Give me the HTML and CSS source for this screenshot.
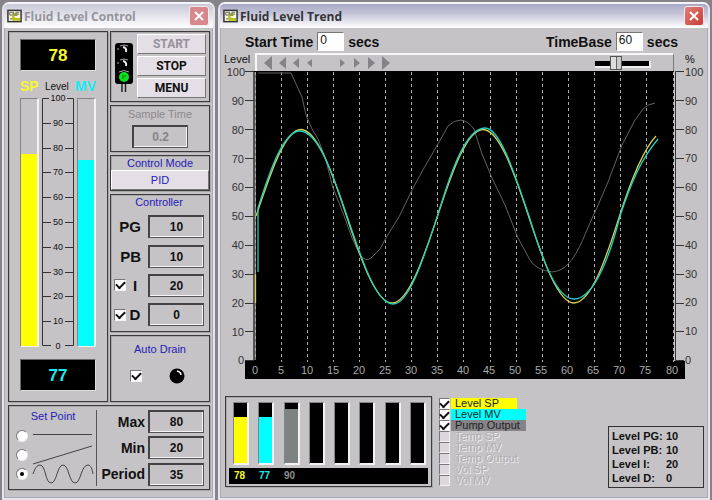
FILE: index.html
```html
<!DOCTYPE html>
<html lang="en">
<head>
<meta charset="utf-8">
<title>Fluid Level Control</title>
<link rel="stylesheet" href="styles.css">
</head>
<body>
<main class="desktop">
  <section class="window inactive">
    <header class="titlebar">
      <svg class="app-icon" viewBox="0 0 16 14" aria-hidden="true"><rect x="1" y="1" width="14" height="12" fill="#fffbe8" stroke="#333" stroke-width="1.6"/><path d="M3 3h4v3H3zM9 3h4M9 5h4M3 10h3" fill="none" stroke="#555"/><path d="M5 8l2-2 2 3h5v3H6z" fill="#b4c41c"/><path d="M5 4h6v3H8z" fill="#8a9830"/></svg>
      <h1>Fluid Level Control</h1>
      <button class="close" aria-label="Close"><svg viewBox="0 0 18 18"><path d="M5 5l8 8M13 5l-8 8"/></svg></button>
    </header>
    <div class="control-client">
      <div class="upper">
        <section class="group gauges">
          <output class="display sp">78</output>
          <div class="gauge-names"><span class="sp">SP</span><small>Level</small><span class="mv">MV</span></div>
          <div class="gauge-bars">
            <div class="track"><div class="fill-sp" style="height:77.5%"></div></div>
            <svg class="scale" viewBox="0 0 34 256" role="img" aria-label="Level scale">
              <path d="M8 4.500H1.500V251.500H10M26 4.500H32.500V251.500H24M1 29.500H10M1 54.500H10M1 78.500H10M1 103.500H10M1 128.500H10M1 153.500H10M1 178.500H10M1 202.500H10M1 227.500H10M24 29.500H33M24 54.500H33M24 78.500H33M24 103.500H33M24 128.500H33M24 153.500H33M24 178.500H33M24 202.500H33M24 227.500H33"/>
              <g><text x="17" y="7">100</text><text x="17" y="32">90</text><text x="17" y="57">80</text><text x="17" y="81">70</text><text x="17" y="106">60</text><text x="17" y="131">50</text><text x="17" y="156">40</text><text x="17" y="181">30</text><text x="17" y="205">20</text><text x="17" y="230">10</text><text x="17" y="255">0</text></g>
            </svg>
            <div class="track"><div class="fill-mv" style="height:75%"></div></div>
          </div>
          <output class="display mv">77</output>
        </section>
        <div class="side">
          <section class="group run">
            <svg class="lights" viewBox="0 0 18 52" role="img" aria-label="Green light"><rect x="0" y="1" width="18" height="41" rx="3" fill="#000"/><path d="M7 42v8M10.500 42v8" stroke="#222" stroke-width="1.500"/><path d="M5 4q4-2 8 0M3 6v2M5 18q4-2 8 0M3 20v2M4 30q5-3 10 0" fill="none" stroke="#aaa"/><path d="M8 5q4 1 3 5M8 19q4 1 3 5" fill="none" stroke="#eee" stroke-width="2"/><circle cx="9" cy="35" r="5" fill="#0ce020"/><path d="M7 34h4M7 36h2" stroke="#087810"/></svg>
            <div class="buttons"><button disabled>START</button><button>STOP</button><button>MENU</button></div>
          </section>
          <section class="group sample">
            <label for="sample">Sample Time</label>
            <input class="field" id="sample" value="0.2" disabled>
          </section>
          <section class="group mode">
            <h2>Control Mode</h2>
            <button>PID</button>
          </section>
          <section class="group controller">
            <h2>Controller</h2>
            <div class="row"><label for="pg">PG</label><input class="field" id="pg" value="10"></div>
            <div class="row"><label for="pb">PB</label><input class="field" id="pb" value="10"></div>
            <div class="row"><input type="checkbox" class="check" checked aria-label="Enable I"><label for="ki">I</label><input class="field" id="ki" value="20"></div>
            <div class="row"><input type="checkbox" class="check" checked aria-label="Enable D"><label for="kd">D</label><input class="field" id="kd" value="0"></div>
          </section>
          <section class="group drain">
            <h2>Auto Drain</h2>
            <div class="drain-row">
              <input type="checkbox" class="check" checked aria-label="Auto Drain">
              <svg class="lamp" viewBox="0 0 16 16" aria-hidden="true"><circle cx="8" cy="8" r="7.500"/><path d="M8 3q4 1 4 4" fill="none" stroke="#fff" stroke-width="1.500"/></svg>
            </div>
          </section>
        </div>
      </div>
      <section class="group setpoint">
        <div class="shapes">
          <h2>Set Point</h2>
          <label><input type="radio" name="shape" aria-label="Constant"><svg viewBox="0 0 62 20"><path d="M1 8.500H60"/></svg></label>
          <label><input type="radio" name="shape" aria-label="Ramp"><svg viewBox="0 0 62 20"><path d="M1 19L60 1"/></svg></label>
          <label><input type="radio" name="shape" aria-label="Sine" checked><svg viewBox="0 0 62 20"><path d="M1 10C3 4 5 1 8 1C14 1 13 19 19 19C25 19 25 1 31 1C37 1 37 19 43 19C49 19 49 1 56 1C59 1 60 5 61 10"/></svg></label>
        </div>
        <div class="limits">
          <label for="max">Max</label><input class="field" id="max" value="80">
          <label for="min">Min</label><input class="field" id="min" value="20">
          <label for="period">Period</label><input class="field" id="period" value="35">
        </div>
      </section>
    </div>
  </section>

  <section class="window">
    <header class="titlebar">
      <svg class="app-icon" viewBox="0 0 16 14" aria-hidden="true"><rect x="1" y="1" width="14" height="12" fill="#fffbe8" stroke="#333" stroke-width="1.6"/><path d="M3 3h4v3H3zM9 3h4M9 5h4M3 10h3" fill="none" stroke="#555"/><path d="M5 8l2-2 2 3h5v3H6z" fill="#b4c41c"/><path d="M5 4h6v3H8z" fill="#8a9830"/></svg>
      <h1>Fluid Level Trend</h1>
      <button class="close" aria-label="Close"><svg viewBox="0 0 18 18"><path d="M5 5l8 8M13 5l-8 8"/></svg></button>
    </header>
    <div class="trend-client">
      <div class="times">
        <div><label for="start">Start Time</label><input id="start" value="0"><span>secs</span></div>
        <div><label for="base">TimeBase</label><input id="base" value="60"><span>secs</span></div>
      </div>
      <div class="scrollrow">
        <span class="axis-name">Level</span>
        <div class="toolbar">
          <div class="arrows">
            <button aria-label="Back to start"><svg viewBox="0 0 14 14"><path d="M11 0V14L3 7z"/></svg></button>
            <button aria-label="Back a page"><svg viewBox="0 0 14 14"><path d="M11 1V13L4 7z"/></svg></button>
            <button aria-label="Back"><svg viewBox="0 0 14 14"><path d="M10 2V12L4 7z"/></svg></button>
            <button aria-label="Step back"><svg viewBox="0 0 14 14"><path d="M9 3V11L4 7z"/></svg></button>
          </div>
          <div class="arrows">
            <button aria-label="Step forward"><svg viewBox="0 0 14 14"><path d="M5 3V11L10 7z"/></svg></button>
            <button aria-label="Forward"><svg viewBox="0 0 14 14"><path d="M5 2V12L11 7z"/></svg></button>
            <button aria-label="Forward a page"><svg viewBox="0 0 14 14"><path d="M5 1V13L12 7z"/></svg></button>
            <button aria-label="Forward to end"><svg viewBox="0 0 14 14"><path d="M5 0V14L13 7z"/></svg></button>
          </div>
          <input type="range" min="0" max="100" value="36" aria-label="Time base">
        </div>
        <span class="axis-name percent">%</span>
      </div>
      <svg class="chart" viewBox="222 66 484 314" role="img" aria-label="Level trend">
        <path d="M253 71H674V361H685V379H245V361H253z" fill="#000"/>
        <path d="M254.500 72V360" stroke="#777" stroke-width="3"/>
        <path class="grid" d="M255.500 72V360M281.500 72V362M307.500 72V362M333.500 72V362M359.500 72V362M385.500 72V362M411.500 72V362M437.500 72V362M463.500 72V362M490.500 72V362M516.500 72V362M542.500 72V362M568.500 72V362M594.500 72V362M620.500 72V362M646.500 72V362M673.500 72V362"/>
        <path class="ticks" d="M245 71.500H254M245 100.500H254M245 129.500H254M245 158.500H254M245 187.500H254M245 216.500H254M245 245.500H254M245 274.500H254M245 303.500H254M245 331.500H254M245 360.500H254V71.500M684 71.500H675.500V360.500H684M675 100.500H684M675 129.500H684M675 158.500H684M675 187.500H684M675 216.500H684M675 245.500H684M675 274.500H684M675 303.500H684M675 331.500H684"/>
        <g class="left"><text x="245" y="76">100</text><text x="244" y="105">90</text><text x="244" y="134">80</text><text x="244" y="163">70</text><text x="244" y="191">60</text><text x="244" y="220">50</text><text x="244" y="249">40</text><text x="244" y="278">30</text><text x="244" y="307">20</text><text x="244" y="336">10</text><text x="244" y="364">0</text></g>
        <g class="right"><text x="685" y="76">100</text><text x="685" y="105">90</text><text x="685" y="134">80</text><text x="685" y="162">70</text><text x="685" y="191">60</text><text x="685" y="220">50</text><text x="685" y="249">40</text><text x="685" y="278">30</text><text x="685" y="306">20</text><text x="685" y="335">10</text><text x="685" y="364">0</text></g>
        <g class="bottom"><text x="255" y="374">0</text><text x="281" y="374">5</text><text x="307" y="374">10</text><text x="333" y="374">15</text><text x="359" y="374">20</text><text x="385" y="374">25</text><text x="411" y="374">30</text><text x="437" y="374">35</text><text x="463" y="374">40</text><text x="489" y="374">45</text><text x="515" y="374">50</text><text x="541" y="374">55</text><text x="567" y="374">60</text><text x="593" y="374">65</text><text x="619" y="374">70</text><text x="645" y="374">75</text><text x="672" y="374">80</text></g>
        <path class="line pump" d="M258 73H291L302 97L306 115L312 129L318 139L325 157L333 188L343 213L352 238L360 255Q366 262 371 258L380 249L386 238L400 215L412 190L424 168L438 144L448 126Q454 120 461 120Q468 121 474 129L482 154L492 178L505 205L518 238L530 260Q536 270 552 272Q562 271 568 264C580 252 585 232 596 210L608 182L622 145L635 120L643 109Q648 104 655 103"/>
        <path class="line level-sp" d="M255.500 303V274M256 216C271 172 285 129.500 301 129.500C317 129.500 332 172 346.500 216C361 260 376 303 392 303C408 303 423 260 437.500 216C452 172 467 129.500 483 129.500C499 129.500 514 172 528.500 216C543 260 558 303 574 303C592 303 608 252 619.500 216C631 180 643 150 656 136"/>
        <path class="line level-mv" d="M258 272V208C271 167 284 131 300 131C318 131 333 174 347 216C362 260 376 304 393 304C409 304 423 260 437.500 216C451 171 466 128 485 128C500 128 514 172 529 216C543 262 557 299 574 299C595 299 611 252 620 216C632 180 642 158 658 139"/>
      </svg>
      <div class="lower">
        <section class="group meters">
          <div class="meter-bars">
            <div><i class="fill-sp" style="height:77%"></i></div><div><i class="fill-mv" style="height:76%"></i></div><div><i class="fill-out" style="height:90%"></i></div><div></div><div></div><div></div><div></div><div></div>
          </div>
          <div class="meter-values"><output class="sp">78</output><output class="mv">77</output><output class="out">90</output></div>
        </section>
        <div class="traces">
          <label class="on"><input type="checkbox" class="check" checked><span class="tag yellow">Level SP</span></label>
          <label class="on"><input type="checkbox" class="check" checked><span class="tag cyan">Level MV</span></label>
          <label class="on"><input type="checkbox" class="check" checked><span class="tag gray">Pump Output</span></label>
          <label><input type="checkbox" class="check" disabled><span>Temp SP</span></label>
          <label><input type="checkbox" class="check" disabled><span>Temp MV</span></label>
          <label><input type="checkbox" class="check" disabled><span>Temp Output</span></label>
          <label><input type="checkbox" class="check" disabled><span>Vol SP</span></label>
          <label><input type="checkbox" class="check" disabled><span>Vol MV</span></label>
        </div>
        <table class="summary">
          <tr><th scope="row">Level PG:</th><td>10</td></tr>
          <tr><th scope="row">Level PB:</th><td>10</td></tr>
          <tr><th scope="row">Level I:</th><td>20</td></tr>
          <tr><th scope="row">Level D:</th><td>0</td></tr>
        </table>
      </div>
    </div>
  </section>
</main>
</body>
</html>
```
FILE: styles.css
```css
* { box-sizing: border-box; }
body { margin: 0; background: #868488; font: 11px "Liberation Sans", Arial, sans-serif; color: #111; }
h1, h2 { margin: 0; }
button, input { font: inherit; color: inherit; margin: 0; padding: 0; border-radius: 0; }
.desktop { display: grid; grid-template-columns: 213fr 492fr; gap: 3px; padding: 2px 2px 3px; }

/* Window frame */
.window { display: flex; flex-direction: column; background: #c6c3c6; border: 2px solid #e6e5ee; border-top-color: #f4f4fa; border-radius: 7px 7px 0 0; box-shadow: inset 0 0 0 1px #aaa8ba; overflow: hidden; }
.titlebar { display: flex; align-items: center; height: 24px; padding: 0 4px 0 3px; background: linear-gradient(#a9a9c6, #c4c4d8 40%, #fff); }
.inactive .titlebar { background: linear-gradient(#c9c9d8, #dedee8 40%, #fff); }
.titlebar h1 { flex: 1; margin-left: 2px; font: bold 12px "Open Sans", "Noto Sans", sans-serif; color: #333338; }
.inactive h1 { color: #96949c; }
.app-icon { width: 15px; height: 14px; }
.close { width: 20px; height: 20px; border: 1px solid #f2eaea; border-radius: 3px; background: linear-gradient(135deg, #e08078, #c83c38); }
.inactive .close { background: #d8888c; }
.close svg { display: block; width: 18px; height: 18px; stroke: #fff; stroke-width: 2; }

.group { border: 1px solid #3c3a3c; box-shadow: inset 1px 1px 0 #aaa7aa, 1px 1px 0 #aaa7aa; }
.group h2 { font-size: 11px; font-weight: normal; line-height: 13px; text-align: center; color: #2420b8; }
.sp { color: #f8f828; }
.mv { color: #18ecf4; }
.out { color: #889090; }
.fill-sp { background: #ff0; }
.fill-mv { background: #0ff; }
.fill-out { background: #7b8480; }

/* Control window */
.control-client { display: flex; flex-direction: column; gap: 3px; padding: 3px 3px 8px 4px; }
.upper { display: grid; grid-template-columns: minmax(0, 1fr) minmax(0, 1fr); gap: 2px; }
.gauges { display: flex; flex-direction: column; padding: 7px 11px 10px; }
.display { display: block; height: 32px; line-height: 31px; text-align: center; background: #000; border: 1px solid #6a686a; border-right-color: #ddd; border-bottom-color: #ddd; font-weight: bold; font-size: 17px; }
.gauge-names { display: flex; justify-content: space-between; align-items: center; margin-top: 7px; height: 16px; font-weight: bold; font-size: 14px; }
.gauge-names small { font-size: 10px; font-weight: normal; color: #111; }
.gauge-bars { display: flex; justify-content: space-between; align-items: center; margin-bottom: 9px; }
.track { display: flex; align-items: flex-end; width: 19px; height: 249px; border: 1px solid #858385; border-width: 1px 2px 1px 1px; border-right-color: #f4f2f4; border-bottom-color: #f4f2f4; }
.track div { width: 100%; }
.scale { width: 34px; height: 256px; }
.scale path { fill: none; stroke: #333; }
.scale text { font-size: 9px; text-anchor: middle; fill: #111; }
.side { display: flex; flex-direction: column; gap: 3px; }
.run { display: flex; gap: 4px; height: 71px; padding: 2px 3px 2px 4px; }
.lights { width: 18px; height: 52px; margin-top: 8px; }
.buttons { flex: 1; display: flex; flex-direction: column; gap: 2px; }
.buttons button, .mode button { border: 1px solid #fff; border-right-color: #777; border-bottom-color: #777; background: #e4dfe6; }
.buttons button { height: 20px; font: bold 12px Roboto, sans-serif; }
.buttons button:disabled { color: #96929a; }
.sample { height: 47px; text-align: center; color: #8b898b; padding-top: 2px; }
.sample label { display: block; line-height: 13px; }
.field { flex: none; width: 56px; height: 23px; border: 2px solid #444244; border-right: 1px solid #555; border-bottom: 1px solid #555; background: #c6c3c6; box-shadow: inset -1px -1px 0 #f6f4f6; text-align: center; font-weight: bold; font-size: 12px; }
.sample .field { margin-top: 4px; color: #858385; }
.mode { height: 36px; padding-top: 1px; }
.mode button { display: block; width: 100%; height: 20px; color: #2420b8; }
.controller { height: 138px; padding: 1px 5px 5px 3px; display: flex; flex-direction: column; justify-content: space-between; }
.row { display: flex; align-items: center; height: 23px; }
.row label { min-width: 12px; margin-left: auto; margin-right: 7px; text-align: center; font-weight: bold; font-size: 15px; }
.check { appearance: none; flex: none; width: 12px; height: 12px; border: 1px solid #777; border-right-color: #f4f4f4; border-bottom-color: #f4f4f4; background: #fff; display: grid; place-items: center; }
.check:checked::before { content: ""; width: 7px; height: 4px; border: solid #111; border-width: 0 0 2px 2px; transform: rotate(-45deg); margin-bottom: 2px; }
.drain { flex: 1; padding-top: 7px; }
.drain-row { display: flex; justify-content: space-between; align-items: center; padding: 12px 24px 12px 19px; }
.lamp { width: 16px; height: 16px; }
.setpoint { display: flex; justify-content: space-between; padding: 4px 5px 3px 7px; }
.shapes { width: 81px; padding-bottom: 3px; border-right: 1px solid #555; }
.shapes h2 { padding-right: 6px; margin-bottom: 4px; line-height: 12px; }
.shapes label { display: flex; align-items: center; gap: 4px; height: 19px; }
.shapes input { appearance: none; width: 12px; height: 12px; border: 1px solid #777; border-right-color: #eee; border-bottom-color: #eee; border-radius: 50%; background: #fff; display: grid; place-items: center; }
.shapes input:checked::before { content: ""; width: 4px; height: 4px; border-radius: 50%; background: #000; }
.shapes svg { width: 62px; height: 20px; fill: none; stroke: #444; }
.limits { display: grid; grid-template-columns: auto 56px; gap: 3px; align-items: center; }
.limits label { text-align: right; font-weight: bold; font-size: 14px; }

/* Trend window */
.trend-client { flex: 1; padding: 2px 2px 0; }
.times { display: flex; justify-content: space-between; height: 23px; padding: 0 28px 0 23px; font-weight: bold; font-size: 14px; }
.times div { display: flex; align-items: center; gap: 4px; }
.times input { width: 27px; height: 19px; padding: 0 2px 3px; border: 1px solid #777; border-right-color: #fff; border-bottom-color: #fff; background: #fff; font-size: 12px; font-weight: normal; }
.scrollrow { display: grid; grid-template-columns: 33px 1fr 32px; height: 18px; }
.axis-name { padding-left: 2px; line-height: 13px; }
.percent { padding-left: 11px; }
.toolbar { display: flex; align-items: center; padding: 0 24px 0 4px; border: 2px solid #f8f6f8; border-right: 1px solid #777; border-bottom: 0; }
.arrows { display: flex; margin-right: 18px; }
.arrows button { width: 14px; height: 14px; border: 0; background: none; }
.arrows svg { display: block; width: 14px; height: 14px; fill: #858288; }
.toolbar input { appearance: none; width: 54px; height: 15px; margin-left: auto; background: none; }
.toolbar input::-webkit-slider-runnable-track { height: 5px; background: #000; box-shadow: 1px 1px 0 1px #eee; }
.toolbar input::-webkit-slider-thumb { appearance: none; width: 12px; height: 14px; margin-top: -5px; border: 1px solid #555; background: linear-gradient(90deg, #ddd 45%, #666 45%, #666 55%, #ccc 55%); }
.chart { display: block; width: 100%; margin-top: -5px; }
.chart text { font-size: 11px; fill: #333; }
.chart .left { text-anchor: end; }
.chart .bottom { text-anchor: middle; }
.chart .bottom text { fill: #aaa; }
.ticks { fill: none; stroke: #333; }
.grid { stroke: #aaa; stroke-dasharray: 3 3; }
.line { fill: none; stroke-linejoin: round; }
.pump { stroke: #626262; }
.level-sp { stroke: #d8d050; stroke-width: 1.3; }
.level-mv { stroke: #20d0c0; stroke-width: 1.3; }
.lower { display: flex; align-items: flex-start; padding: 16px 2px 5px 3px; }
.meters { width: 207px; height: 91px; padding: 5px 3px 2px; display: flex; flex-direction: column; justify-content: space-between; }
.meter-bars { display: flex; justify-content: space-between; padding: 0 2px 0 4px; }
.meter-bars div { display: flex; align-items: flex-end; width: 16px; height: 63px; background: #000; border: 1px solid #858385; border-right: 2px solid #f4f2f4; border-bottom: 2px solid #f4f2f4; }
.meter-bars i { width: 100%; }
.meter-values { display: flex; height: 16px; padding-left: 5px; background: #000; font-weight: bold; font-size: 10px; line-height: 16px; }
.meter-values output { width: 25px; }
.traces { margin: 2px 0 0 7px; }
.traces label { display: flex; align-items: center; gap: 1px; height: 11px; line-height: 11px; color: #b0adb0; text-shadow: 1px 1px 0 #eee; }
.traces .on { color: #222; text-shadow: none; }
.traces .check { width: 11px; height: 11px; }
.traces .check:disabled { background: #ddd6dd; }
.traces span { padding-left: 4px; }
.tag { width: 75px; }
.yellow { width: 66px; background: #ff0; }
.cyan { background: #0ff; }
.gray { background: #858388; }
.summary { width: 96px; margin: 30px 0 0 auto; border: 1px solid #333; border-collapse: separate; border-spacing: 0; padding: 2px 0 2px 3px; }
.summary th, .summary td { padding: 0; text-align: left; line-height: 14px; font-weight: bold; }
.summary th { width: 54px; }
```
